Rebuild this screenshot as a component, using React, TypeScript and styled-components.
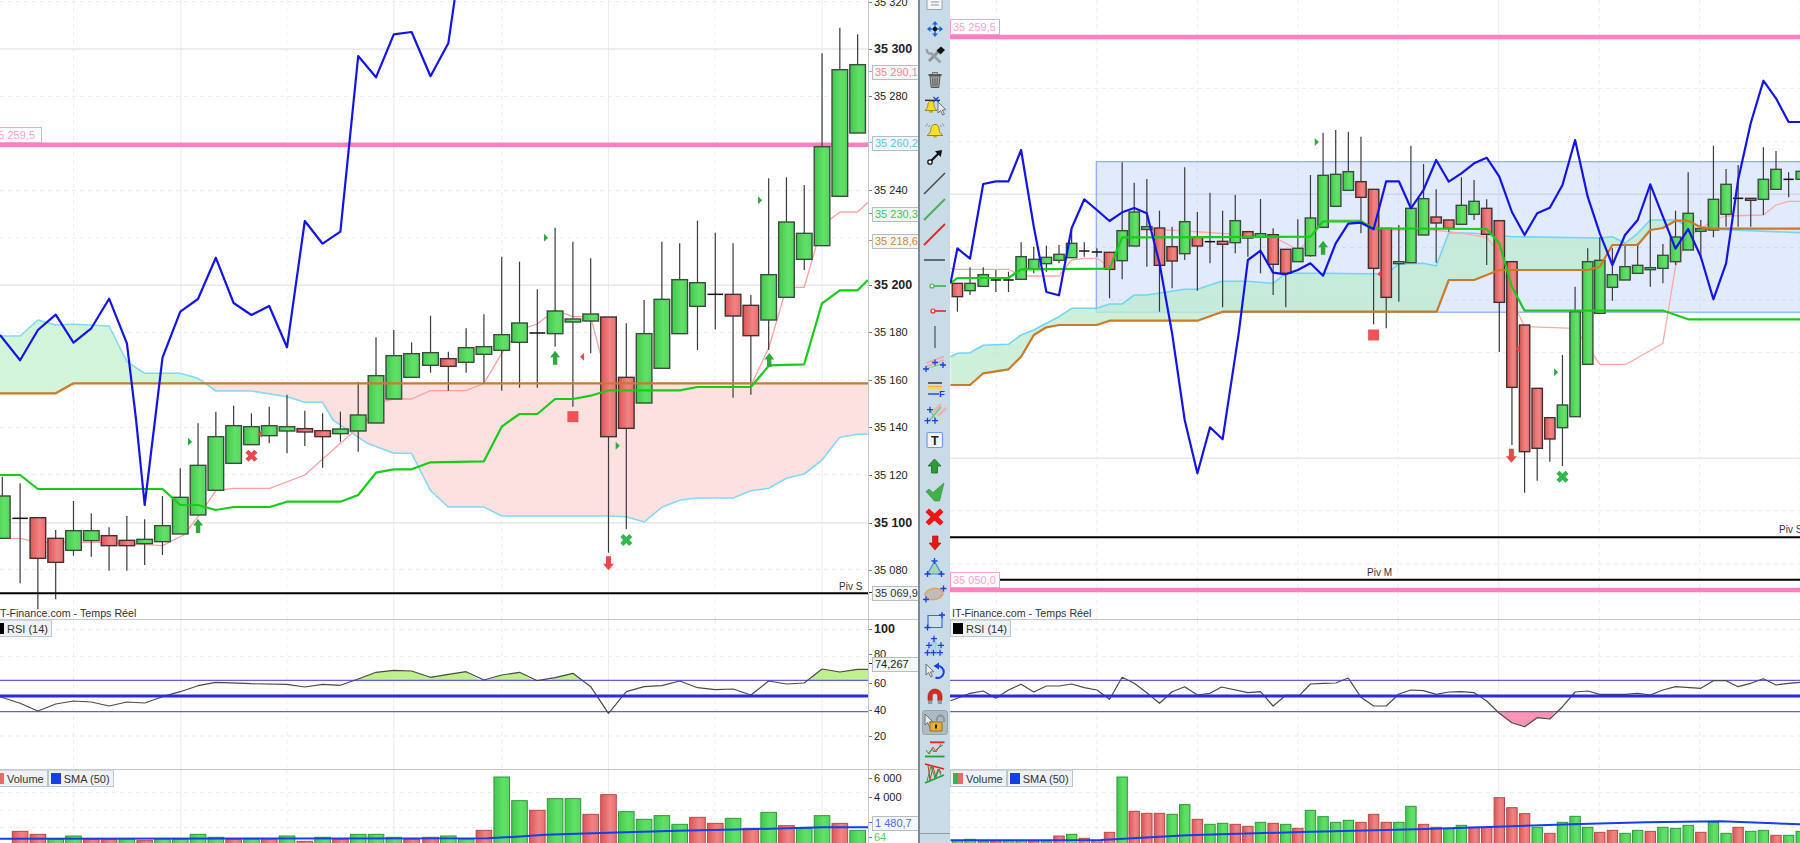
import React from 'react';
import styled, { createGlobalStyle } from 'styled-components';

const GlobalStyle = createGlobalStyle`
  html, body {
    margin: 0;
    padding: 0;
    background: #fff;
    font-family: "Liberation Sans", Arial, sans-serif;
    overflow: hidden;
  }
`;

type Pt = [number, number];
type Kind = 'g' | 'r' | 'd';
type Candle = [number, number, number, number, number, Kind];
type Bar = [number, number, Kind];

// Chart values are read off the reference crops: x was squeezed by 1.742 and y stretched by 3
const kx = 1.742;
const PRICE_TOP = 0;
const RSI_TOP = 620;
const VOL_TOP = 770;
const low = (pts: Pt[]): Pt[] => pts.map(([x, y]) => [x, y + 1260]);

const path = (pts: Pt[], dx: number, top: number) =>
  pts.map(([x, y]) => `${(x / kx - dx).toFixed(1)},${(y / 3 - top).toFixed(1)}`).join(' ');

// Left chart
const leftCandles: Candle[] = [
  ...([
    [4, 228, 355, 170, 355, 'g'], [35, 295, 295, 190, 490, 'd'], [66, 293, 415, 293, 568, 'r'],
    [97, 355, 427, 330, 538, 'r'], [128, 332, 391, 243, 407, 'g'], [159, 332, 362, 280, 410, 'g'],
    [190, 347, 377, 322, 452, 'r'], [221, 361, 377, 288, 452, 'r'], [252, 358, 371, 298, 435, 'g'],
    [283, 317, 365, 228, 405, 'g'], [314, 232, 342, 145, 342, 'g'], [345, 136, 285, 10, 285, 'g'],
    [376, 50, 211, -25, 211, 'g'], [407, 17, 130, -43, 130, 'g'], [438, 20, 74, -20, 74, 'g'],
    [469, 17, 47, -40, 70, 'g'], [500, 20, 33, -76, 100, 'g'], [531, 26, 36, -28, 78, 'r'],
    [562, 32, 50, -20, 143, 'r'], [593, 27, 41, -25, 65, 'g'], [624, -15, 33, -115, 95, 'g'],
    [655, -133, 9, -248, 9, 'g'],
  ] as Candle[]).map(([x, t, b, h, l, k]) => [x, t + 1260, b + 1260, h + 1260, l + 1260, k] as Candle),
  [686, 1067, 1197, 990, 1197, 'g'], [717, 1061, 1132, 1027, 1132, 'g'], [750, 1058, 1096, 947, 1118, 'g'],
  [781, 1076, 1099, 1055, 1172, 'r'], [812, 1043, 1087, 985, 1118, 'g'], [843, 1040, 1063, 943, 1150, 'g'],
  [874, 1004, 1051, 770, 1172, 'g'], [905, 969, 1027, 785, 1163, 'g'], [936, 999, 999, 868, 1163, 'd'],
  [967, 933, 1001, 683, 1040, 'g'], [998, 957, 966, 725, 1220, 'g'], [1029, 942, 963, 775, 1060, 'g'],
  [1060, 951, 1310, 951, 1658, 'r'], [1091, 1132, 1285, 970, 1588, 'r'], [1122, 1001, 1209, 900, 1209, 'g'],
  [1153, 898, 1105, 725, 1105, 'g'], [1184, 839, 1001, 730, 1001, 'g'], [1215, 848, 919, 662, 1050, 'g'],
  [1246, 883, 883, 698, 988, 'd'], [1277, 883, 948, 730, 1193, 'r'], [1308, 916, 1007, 885, 1184, 'r'],
  [1339, 824, 960, 535, 1050, 'g'], [1370, 666, 892, 532, 892, 'g'], [1401, 700, 778, 555, 810, 'g'],
  [1432, 440, 737, 160, 737, 'g'], [1463, 209, 589, 83, 589, 'g'], [1494, 194, 399, 103, 399, 'g'],
];

const leftBlue: Pt[] = [
  [0, 1005], [35, 1081], [66, 990], [97, 944], [128, 1028], [159, 985], [190, 896], [221, 1030], [237, 1260],
  [252, 1515], [270, 1260], [283, 1073], [314, 935], [345, 897], [376, 773], [407, 909], [438, 945], [469, 918],
  [500, 1042], [531, 663], [562, 731], [593, 695], [624, 168], [655, 232], [686, 103], [717, 96], [750, 229],
  [781, 130], [792, 0],
];
const leftPink: Pt[] = [
  ...low([[0, 355], [35, 355], [66, 367], [190, 367], [283, 377], [320, 345], [345, 290], [376, 212], [407, 205],
    [470, 205], [531, 165], [593, 70], [640, 0]]),
  [655, 1210], [686, 1197], [717, 1197], [750, 1172], [812, 1172], [843, 1150], [874, 1060], [905, 990], [936, 972],
  [967, 930], [998, 950], [1029, 950], [1048, 1075], [1060, 1150], [1310, 1150], [1340, 1040], [1370, 862],
  [1401, 862], [1432, 677], [1463, 636], [1494, 636], [1512, 607],
];
const leftGreen: Pt[] = [
  ...low([[0, 165], [35, 165], [66, 207], [283, 207], [314, 255], [345, 255], [376, 270], [407, 261], [470, 261],
    [500, 245], [593, 245], [624, 225], [655, 158], [686, 148], [717, 148], [750, 127], [843, 124], [874, 20], [890, 0]]),
  [905, 1242], [936, 1242], [967, 1197], [998, 1197], [1029, 1187], [1060, 1171], [1184, 1171], [1215, 1161],
  [1308, 1161], [1340, 1096], [1401, 1093], [1432, 910], [1463, 871], [1494, 871], [1512, 840],
];
const leftOrange: Pt[] = [[0, 1180], [97, 1180], [128, 1150], [1512, 1150]];
const leftCloudTop: Pt[] = [[0, 1008], [35, 1008], [66, 960], [97, 975], [128, 973], [190, 978], [221, 1085], [252, 1120], [314, 1120], [345, 1135], [358, 1150]];
const leftCloudLow: Pt[] = [
  [358, 1150], [376, 1173], [438, 1173], [500, 1190], [531, 1207], [562, 1207], [580, 1260],
  ...low([[640, 70], [686, 100], [717, 100], [750, 212], [781, 261], [843, 261], [874, 288], [1060, 288], [1091, 290],
    [1122, 306], [1153, 262], [1184, 241], [1215, 234], [1277, 234], [1308, 212], [1339, 205], [1370, 175], [1401, 162],
    [1432, 120], [1463, 52], [1494, 43], [1512, 43]]),
];

// Right chart
const rightCandles: Candle[] = [
  [100, 850, 890, 850, 935, 'r'], [122, 850, 872, 802, 885, 'g'], [145, 824, 859, 802, 859, 'g'], [167, 840, 840, 810, 876, 'd'],
  [189, 840, 840, 815, 876, 'd'], [211, 770, 838, 727, 838, 'g'], [233, 778, 807, 740, 820, 'g'], [255, 772, 791, 737, 815, 'g'],
  [277, 763, 781, 735, 790, 'g'], [299, 730, 773, 685, 773, 'g'], [321, 753, 753, 727, 770, 'd'], [343, 756, 756, 745, 770, 'd'],
  [365, 757, 808, 757, 895, 'r'], [387, 692, 782, 487, 838, 'g'], [408, 636, 738, 548, 738, 'g'], [430, 680, 688, 537, 800, 'g'],
  [452, 684, 796, 632, 935, 'r'], [474, 740, 783, 680, 865, 'r'], [496, 665, 761, 502, 780, 'g'], [518, 712, 738, 636, 872, 'r'],
  [540, 725, 725, 578, 790, 'd'], [562, 724, 733, 632, 922, 'r'], [584, 662, 728, 585, 760, 'g'], [606, 695, 714, 695, 770, 'r'],
  [628, 701, 710, 597, 820, 'g'], [650, 704, 793, 685, 885, 'r'], [672, 748, 820, 748, 922, 'r'], [693, 745, 785, 658, 785, 'g'],
  [715, 654, 767, 525, 770, 'g'], [737, 526, 682, 398, 682, 'g'], [759, 523, 619, 390, 619, 'g'], [781, 515, 571, 395, 571, 'g'],
  [803, 545, 592, 410, 700, 'r'], [825, 568, 805, 568, 973, 'r'], [847, 685, 892, 685, 985, 'r'], [869, 785, 791, 675, 905, 'g'],
  [890, 625, 788, 437, 788, 'g'], [912, 596, 705, 492, 705, 'g'], [934, 651, 669, 568, 788, 'r'], [956, 660, 685, 660, 695, 'r'],
  [978, 616, 673, 532, 673, 'g'], [1000, 604, 643, 540, 660, 'g'], [1022, 625, 703, 598, 795, 'r'], [1044, 662, 907, 662, 1056, 'r'],
  [1066, 785, 1162, 785, 1335, 'r'], [1088, 975, 1355, 975, 1478, 'r'], [1110, 1165, 1345, 1165, 1442, 'r'], [1132, 1253, 1317, 1253, 1385, 'r'],
  [1154, 1215, 1283, 1065, 1398, 'g'], [1176, 935, 1250, 860, 1250, 'g'], [1198, 785, 1093, 745, 1093, 'g'], [1219, 781, 940, 712, 940, 'g'],
  [1241, 824, 862, 745, 902, 'g'], [1263, 800, 840, 737, 840, 'g'], [1285, 796, 820, 730, 820, 'g'], [1307, 803, 807, 552, 860, 'g'],
  [1329, 766, 805, 732, 850, 'g'], [1351, 711, 785, 632, 795, 'g'], [1373, 640, 750, 517, 750, 'g'], [1395, 686, 694, 660, 770, 'g'],
  [1417, 598, 690, 437, 712, 'g'], [1439, 553, 643, 507, 680, 'g'], [1460, 595, 595, 495, 680, 'd'], [1482, 595, 601, 595, 680, 'r'],
  [1504, 538, 598, 442, 645, 'g'], [1526, 508, 568, 453, 568, 'g'], [1548, 538, 538, 517, 592, 'd'], [1570, 514, 538, 480, 560, 'g'],
];
const rightBlue: Pt[] = [
  [88, 850], [100, 745], [122, 776], [145, 552], [167, 544], [189, 544], [211, 450], [233, 680], [255, 876], [277, 886], [299, 685],
  [321, 598], [343, 630], [365, 663], [387, 637], [408, 624], [430, 640], [452, 790], [474, 1000], [496, 1260], [518, 1420], [540, 1282],
  [562, 1318], [590, 1000], [606, 780], [628, 752], [650, 818], [672, 823], [693, 810], [715, 790], [737, 827], [759, 730], [781, 671],
  [803, 668], [825, 688], [847, 544], [869, 544], [890, 625], [912, 570], [934, 480], [956, 545], [978, 520], [1000, 490], [1022, 473],
  [1044, 530], [1066, 636], [1088, 705], [1110, 640], [1132, 623], [1154, 555], [1176, 420], [1198, 590], [1219, 700], [1241, 795],
  [1263, 705], [1285, 660], [1307, 553], [1329, 650], [1351, 746], [1373, 687], [1395, 770], [1417, 898], [1439, 790], [1460, 540],
  [1482, 370], [1504, 242], [1526, 295], [1548, 366], [1570, 366],
];
const rightPink: Pt[] = [
  [88, 805], [100, 808], [189, 808], [211, 828], [277, 828], [299, 780], [321, 775], [343, 775], [365, 800], [387, 700], [408, 690],
  [470, 690], [650, 710], [672, 730], [693, 750], [715, 720], [737, 660], [803, 660], [825, 690], [930, 690], [980, 700], [1022, 712],
  [1044, 760], [1066, 900], [1088, 980], [1176, 985], [1219, 1093], [1265, 1093], [1329, 1030], [1351, 800], [1373, 712], [1417, 660],
  [1439, 648], [1504, 645], [1526, 615], [1548, 604], [1570, 604],
];
const rightGreen: Pt[] = [
  [88, 850], [100, 834], [189, 834], [211, 808], [365, 806], [387, 712], [430, 712], [715, 710], [737, 664], [803, 664], [825, 685],
  [1022, 687], [1044, 730], [1066, 860], [1088, 932], [1330, 932], [1373, 958], [1570, 958],
];
const rightOrange: Pt[] = [
  [88, 1155], [122, 1155], [145, 1120], [189, 1108], [211, 1070], [233, 1005], [255, 982], [277, 975], [343, 975], [365, 962], [518, 962],
  [562, 935], [935, 935], [956, 840], [1000, 840], [1044, 810], [1198, 810], [1219, 800], [1241, 735], [1285, 735], [1307, 690], [1329, 684],
  [1351, 662], [1373, 662], [1395, 682], [1417, 686], [1570, 686],
];
const rightCloud: Pt[] = [
  [88, 1070], [100, 1060], [122, 1058], [145, 1036], [189, 1033], [211, 1005], [233, 990], [255, 970], [277, 950], [299, 925], [343, 925],
  [365, 912], [387, 912], [408, 885], [430, 885], [496, 868], [518, 868], [560, 844], [606, 844], [650, 850], [672, 820], [737, 820],
  [847, 822], [869, 792], [912, 790], [934, 798], [956, 698], [1000, 700], [1066, 710], [1219, 714], [1241, 710], [1263, 730], [1285, 700],
  [1307, 660], [1351, 660], [1373, 680], [1395, 686], [1570, 698],
];

// RSI, y from the lower crops
const leftRsi: Pt[] = [
  [0, 830], [35, 850], [66, 873], [97, 852], [128, 843], [159, 846], [190, 858], [221, 846], [252, 849], [283, 830], [314, 815], [345, 797],
  [376, 787], [438, 791], [500, 793], [531, 801], [562, 793], [593, 796], [624, 777], [655, 757], [686, 751], [717, 753], [750, 772], [781, 763],
  [812, 755], [843, 780], [874, 765], [905, 757], [936, 782], [967, 773], [998, 760], [1029, 800], [1060, 880], [1091, 815], [1122, 800],
  [1153, 797], [1184, 783], [1215, 803], [1246, 809], [1277, 807], [1308, 825], [1339, 783], [1370, 792], [1401, 789], [1432, 747], [1463, 756],
  [1494, 748], [1512, 748],
];
const rightRsi: Pt[] = [
  [88, 842], [100, 835], [122, 820], [145, 813], [167, 835], [189, 810], [211, 793], [233, 816], [255, 798], [277, 798], [299, 792], [321, 803],
  [343, 810], [365, 838], [387, 772], [408, 790], [430, 818], [452, 850], [474, 815], [496, 800], [518, 825], [540, 820], [560, 801], [606, 818],
  [628, 815], [650, 858], [672, 826], [696, 826], [715, 792], [737, 790], [759, 789], [781, 774], [803, 832], [825, 858], [847, 858], [869, 822],
  [890, 810], [912, 812], [934, 823], [956, 816], [978, 815], [1000, 818], [1022, 843], [1044, 880], [1066, 908], [1088, 920], [1110, 893],
  [1132, 897], [1154, 860], [1176, 816], [1198, 813], [1219, 823], [1263, 823], [1285, 820], [1307, 825], [1329, 810], [1351, 800], [1395, 805],
  [1417, 782], [1439, 782], [1460, 800], [1482, 790], [1504, 776], [1526, 795], [1548, 790], [1570, 787],
];
const leftRsiHigh: Pt[][] = [
  [[612, 781], [624, 777], [655, 757], [686, 751], [717, 753], [750, 772], [781, 763], [812, 755], [835, 781]],
  [[848, 781], [874, 765], [905, 757], [928, 781]],
  [[958, 781], [967, 773], [998, 760], [1015, 781]],
  [[1410, 781], [1432, 747], [1463, 756], [1494, 748], [1512, 748], [1512, 781]],
];
const rightRsiLow: Pt[] = [[1042, 875], [1044, 880], [1066, 908], [1088, 920], [1110, 893], [1132, 897], [1141, 875]];

const leftBars: Bar[] = [
  [35, 1234, 'r'], [66, 1243, 'r'], [97, 1257, 'g'], [128, 1248, 'g'], [159, 1258, 'r'], [190, 1258, 'r'], [221, 1257, 'g'], [252, 1262, 'r'],
  [283, 1257, 'g'], [314, 1258, 'g'], [345, 1243, 'g'], [376, 1252, 'g'], [407, 1258, 'r'], [438, 1257, 'g'], [469, 1257, 'r'], [500, 1248, 'g'],
  [531, 1264, 'r'], [562, 1252, 'g'], [593, 1258, 'r'], [624, 1243, 'g'], [655, 1243, 'g'], [686, 1252, 'g'], [717, 1258, 'r'], [750, 1252, 'r'],
  [781, 1248, 'g'], [812, 1258, 'g'], [843, 1231, 'r'], [874, 1071, 'g'], [905, 1142, 'g'], [936, 1171, 'r'], [967, 1136, 'g'], [998, 1136, 'g'],
  [1029, 1183, 'r'], [1060, 1124, 'r'], [1091, 1175, 'g'], [1122, 1198, 'g'], [1153, 1187, 'g'], [1184, 1213, 'g'], [1215, 1192, 'r'], [1246, 1210, 'r'],
  [1277, 1195, 'g'], [1308, 1225, 'r'], [1339, 1177, 'g'], [1370, 1217, 'r'], [1401, 1226, 'g'], [1432, 1187, 'g'], [1463, 1210, 'r'], [1494, 1231, 'g'],
];
const rightBars: Bar[] = [
  [100, 1262, 'g'], [122, 1258, 'g'], [145, 1265, 'g'], [167, 1263, 'r'], [189, 1262, 'g'], [211, 1262, 'g'], [233, 1264, 'r'], [255, 1265, 'g'],
  [277, 1248, 'r'], [299, 1243, 'g'], [321, 1255, 'r'], [343, 1262, 'r'], [365, 1237, 'r'], [387, 1071, 'g'], [408, 1174, 'r'], [430, 1180, 'r'],
  [452, 1180, 'r'], [474, 1183, 'g'], [496, 1154, 'g'], [518, 1198, 'r'], [540, 1213, 'g'], [562, 1210, 'g'], [584, 1213, 'r'], [606, 1219, 'r'],
  [628, 1207, 'g'], [650, 1210, 'r'], [672, 1213, 'g'], [693, 1225, 'r'], [715, 1171, 'g'], [737, 1190, 'g'], [759, 1207, 'g'], [781, 1201, 'g'],
  [803, 1207, 'r'], [825, 1183, 'r'], [847, 1207, 'r'], [869, 1207, 'g'], [890, 1159, 'g'], [912, 1213, 'r'], [934, 1222, 'r'], [956, 1226, 'g'],
  [978, 1216, 'g'], [1000, 1222, 'r'], [1022, 1222, 'r'], [1044, 1133, 'r'], [1066, 1163, 'r'], [1088, 1181, 'r'], [1110, 1222, 'g'], [1132, 1240, 'r'],
  [1154, 1207, 'g'], [1176, 1189, 'g'], [1198, 1222, 'g'], [1219, 1237, 'r'], [1241, 1231, 'r'], [1263, 1240, 'g'], [1285, 1231, 'g'], [1307, 1234, 'r'],
  [1329, 1222, 'g'], [1351, 1225, 'g'], [1373, 1216, 'g'], [1395, 1237, 'r'], [1417, 1207, 'g'], [1439, 1240, 'g'], [1460, 1222, 'r'], [1482, 1234, 'g'],
  [1504, 1231, 'g'], [1526, 1246, 'r'], [1548, 1246, 'g'], [1570, 1234, 'g'],
];
const leftSma: Pt[] = [[0, 1256], [850, 1255], [900, 1250], [950, 1244], [1060, 1238], [1180, 1232], [1300, 1228], [1432, 1222], [1512, 1222]];
const rightSma: Pt[] = [[88, 1261], [350, 1260], [500, 1246], [700, 1236], [900, 1228], [1040, 1220], [1170, 1213], [1300, 1207], [1430, 1204], [1570, 1213]];

// Page layout
const Page = styled.div`
  display: grid;
  grid-template-columns: 918px 32px 850px;
  width: 1800px;
  height: 843px;
  overflow: hidden;
`;

const Chart = styled.section`
  display: flex;
  flex-direction: column;
  height: 843px;
  min-width: 0;
  overflow: hidden;
`;

const Pane = styled.div<{ $h: number; $last?: boolean }>`
  display: flex;
  height: ${(p) => p.$h}px;
  flex: none;
  box-sizing: border-box;
  border-bottom: ${(p) => (p.$last ? 'none' : '1px solid #c2cace')};
`;

const Plot = styled.div`
  position: relative;
  flex: 1;
  min-width: 0;
  overflow: hidden;

  svg {
    display: block;
    width: 100%;
    height: 100%;
  }
`;

const Axis = styled.div`
  position: relative;
  flex: none;
  width: 50px;
  box-sizing: border-box;
  border-left: 1px solid #c2cace;
  overflow: hidden;
`;

const AxisLabel = styled.span<{ $y: number; $bold?: boolean; $color?: string }>`
  position: absolute;
  left: 5px;
  top: ${(p) => p.$y - 7}px;
  height: 14px;
  line-height: 14px;
  font-size: ${(p) => (p.$bold ? 12.5 : 11)}px;
  font-weight: ${(p) => (p.$bold ? 700 : 400)};
  color: ${(p) => p.$color ?? '#222'};
  white-space: nowrap;

  &::before {
    content: '';
    position: absolute;
    left: -5px;
    top: 7px;
    width: 3px;
    height: 1px;
    background: #777;
  }
`;

const AxisTag = styled.span<{ $y: number; $color: string }>`
  position: absolute;
  left: 3px;
  top: ${(p) => p.$y - 8}px;
  width: 50px;
  height: 15px;
  box-sizing: border-box;
  padding-left: 2px;
  line-height: 12px;
  font-size: 11px;
  color: ${(p) => p.$color};
  background: #f3f7fa;
  border: 1.5px solid #b6bec2;
  white-space: nowrap;

  &::before {
    content: '';
    position: absolute;
    left: -5px;
    top: 5px;
    width: 4px;
    height: 1px;
    background: ${(p) => p.$color};
  }
`;

const LevelTag = styled.span<{ $x: number; $y: number; $w: number }>`
  position: absolute;
  left: ${(p) => p.$x}px;
  top: ${(p) => p.$y}px;
  width: ${(p) => p.$w}px;
  height: 16px;
  box-sizing: border-box;
  padding: 0 6px 0 2px;
  line-height: 15px;
  font-size: 11px;
  color: #ff9fcf;
  background: #fff;
  border: 1px solid #ff9fcf;
  white-space: nowrap;
  text-align: ${(p) => (p.$x < 0 ? 'right' : 'left')};
`;

const PivotLabel = styled.span<{ $x: number; $y: number }>`
  position: absolute;
  left: ${(p) => p.$x}px;
  top: ${(p) => p.$y - 7}px;
  line-height: 14px;
  font-size: 10px;
  color: #333;
  white-space: nowrap;
`;

const Source = styled.span<{ $x: number }>`
  position: absolute;
  left: ${(p) => p.$x}px;
  top: 606px;
  line-height: 14px;
  font-size: 10.7px;
  color: #333;
  white-space: nowrap;
`;

const LegendRow = styled.div<{ $x: number }>`
  position: absolute;
  left: ${(p) => p.$x}px;
  top: 0;
  display: flex;
  height: 17px;
`;

const Legend = styled.span`
  display: flex;
  align-items: center;
  gap: 3px;
  padding: 0 3px 0 2px;
  box-sizing: border-box;
  font-size: 11px;
  color: #333;
  background: #eef2f4;
  border: 1px solid #b8c6ce;
  border-top-color: #d0d8dc;
  white-space: nowrap;
`;

const Swatch = styled.i<{ $c: string; $c2?: string }>`
  display: block;
  width: 10px;
  height: 11px;
  background: ${(p) =>
    p.$c2 ? `linear-gradient(90deg, ${p.$c} 50%, ${p.$c2} 50%)` : p.$c};
`;

const Defs = styled.svg`
  position: absolute;
  width: 0;
  height: 0;
`;

// Toolbar
const Toolbar = styled.nav`
  display: flex;
  flex-direction: column;
  height: 843px;
  box-sizing: border-box;
  background: #c9dbe6;
  border-left: 2px solid #7e8a92;
  overflow: hidden;
`;

const ToolList = styled.div`
  display: grid;
  grid-auto-rows: 25.72px;
  justify-items: center;
  align-items: center;
  margin-top: -10px;
`;

const Tool = styled.button<{ $active?: boolean }>`
  display: flex;
  align-items: center;
  justify-content: center;
  width: 26px;
  height: 25px;
  padding: 0;
  background: ${(p) => (p.$active ? '#aebac2' : 'transparent')};
  border: 1px solid ${(p) => (p.$active ? '#9aa6ae' : 'transparent')};
  border-radius: 3px;

  svg {
    display: block;
    flex: none;
  }
`;

const ToolFoot = styled.div`
  margin-top: auto;
  height: 9px;
  border-top: 1px solid #8f9ca4;
`;

const Plus = ({ x, y }: { x: number; y: number }) => (
  <path d={`M${x - 3} ${y}h6M${x} ${y - 3}v6`} stroke="#1a3fe0" strokeWidth="1.3" fill="none" />
);

const Cursor = ({ x, y }: { x: number; y: number }) => (
  <path
    d={`M${x} ${y}l0 11 2.6-2.4 2 4.4 1.8-.8-2-4.3 3.4-.2z`}
    fill="#e8eaec"
    stroke="#555"
    strokeWidth=".8"
  />
);

const toolIcons: React.ReactNode[] = [
  <g key="doc">
    <path d="M7 -4h11l4 4v19.500H7z" fill="#f4f6f8" stroke="#9aa4aa" />
    <path d="M11 6h8M11 9h8M11 12h8M11 15h8" stroke="#8a949a" />
  </g>,
  <g key="move">
    <path d="M15 5l3 3.500h-6zM15 21l3-3.500h-6zM7 13l3.500-3v6zM23 13l-3.500-3v6z" fill="#1a66e0" />
    <path d="M15 7v12M9 13h12" stroke="#1a66e0" strokeWidth="1.500" />
    <circle cx="15" cy="13" r="2.200" fill="#111" />
  </g>,
  <g key="tools">
    <path d="M9 20L20 9" stroke="#8c9499" strokeWidth="3" />
    <path d="M7 8a3.500 3.500 0 0 0 4.500 4.500l9 9" stroke="#9aa2a7" strokeWidth="2.600" fill="none" />
    <path d="M16.500 9.500l4.500-4 4 3.500-4.500 4.500z" fill="#151515" />
  </g>,
  <g key="trash">
    <path d="M10 9h10l-1.200 11.500h-7.600z" fill="#a4acb0" stroke="#555" />
    <path d="M8.500 8h13" stroke="#555" strokeWidth="2" />
    <path d="M12.500 5.500h5v2h-5z" fill="#c4c8cc" stroke="#555" strokeWidth=".8" />
    <path d="M12.700 10.500l.4 9M15 10.500v9M17.300 10.500l-.4 9" stroke="#555" />
  </g>,
  <g key="bell-x">
    <path d="M5 7.300h15" stroke="#111" strokeWidth="1.200" />
    <path d="M11 8c-2.600 0-3 2.500-3.200 5-.2 2.500-2.800 4.500-2.800 4.500h12s-2.600-2-2.800-4.500C14 10.500 13.600 8 11 8z" fill="#f2dc2a" stroke="#8d7a10" strokeWidth=".8" />
    <path d="M9 18a2 2 0 0 0 4 0z" fill="#c2a814" />
    <path d="M13.500 4l5 5M18.500 4l-5 5" stroke="#1a3fe0" strokeWidth="1.200" />
    <Cursor x={18} y={9} />
  </g>,
  <g key="bell">
    <path d="M15 6.500c-3.500 0-4 3-4.200 6-.2 2.500-3.800 5-3.800 5h16s-3.600-2.500-3.800-5c-.2-3-.7-6-4.200-6z" fill="#f7e02a" stroke="#8d7a10" strokeWidth=".9" />
    <path d="M12.800 18a2.300 2.300 0 0 0 4.400 0z" fill="#c2a814" />
    <path d="M8 5.500c-1.200.8-1.800 1.800-2 3M10 7c-.7.500-1.200 1-1.400 2M22 5.500c1.200.8 1.800 1.800 2 3M20 7c.7.500 1.200 1 1.400 2" stroke="#8d979c" fill="none" />
  </g>,
  <g key="arrow">
    <circle cx="10" cy="18" r="2.200" fill="#fff" stroke="#111" strokeWidth="1.300" />
    <path d="M11.500 16.500L19 9" stroke="#111" strokeWidth="2.200" />
    <path d="M22 6l-1.200 7-5.800-5.800z" fill="#111" />
  </g>,
  <path key="line" d="M4 24L25 3" stroke="#444" strokeWidth="1.400" />,
  <path key="green" d="M4 24L25 3" stroke="#3cb34a" strokeWidth="1.800" />,
  <path key="red" d="M4 24L25 3" stroke="#ee2222" strokeWidth="1.800" />,
  <path key="hline" d="M4 13h21" stroke="#222" strokeWidth="1.200" />,
  <g key="green-h">
    <path d="M14 13h12" stroke="#3cb34a" strokeWidth="1.600" />
    <circle cx="12" cy="13" r="2" fill="#fff" stroke="#3cb34a" strokeWidth="1.200" />
  </g>,
  <g key="red-h">
    <path d="M15 13h11" stroke="#ee2222" strokeWidth="1.600" />
    <circle cx="13" cy="13" r="2" fill="#fff" stroke="#ee2222" strokeWidth="1.200" />
  </g>,
  <path key="vline" d="M15 2v22" stroke="#5c666c" strokeWidth="1.400" />,
  <g key="channel">
    <path d="M6 13L24 6.500M6 16.500L24 10" stroke="#f0a6a0" strokeWidth="1.600" />
    <path d="M6 19L24 13" stroke="#7ccf8a" strokeWidth="1.300" />
    <Plus x={6} y={19} />
    <Plus x={15} y={12.500} />
    <Plus x={23} y={15} />
  </g>,
  <g key="fib">
    <path d="M8 7h14" stroke="#111" strokeWidth="1.200" />
    <path d="M8 10.500h14" stroke="#f0b040" />
    <path d="M8 12.500h14" stroke="#f2d24a" />
    <path d="M8 18h11" stroke="#1a3fe0" strokeWidth="1.400" />
    <text x="19" y="20.500" fontFamily="Liberation Sans, sans-serif" fontSize="9.500" fontWeight="700" fill="#1a3fe0">F</text>
  </g>,
  <g key="parallel">
    <path d="M13 11L21 3M18 15L26 7" stroke="#f0b0ac" strokeWidth="2.600" />
    <path d="M9 20L21 6" stroke="#68c878" strokeWidth="1.400" />
    <path d="M10 9l6 10" stroke="#68c878" strokeWidth="1.400" />
    <Plus x={10} y={8.700} />
    <Plus x={7.500} y={19.700} />
    <Plus x={15} y={19.700} />
  </g>,
  <g key="text">
    <rect x="7" y="5.500" width="15.500" height="15" rx="1.500" fill="#f2f6fa" stroke="#6a9cf0" strokeWidth="1.200" />
    <text x="14.800" y="17.500" textAnchor="middle" fontFamily="Liberation Sans, sans-serif" fontSize="12.500" fontWeight="700" fill="#222">T</text>
  </g>,
  <path key="up" d="M14.500 6l6.500 7h-3.500v7h-6v-7H8z" fill="#2e9a3a" stroke="#1c6a26" strokeWidth=".8" />,
  <path key="check" d="M6 12.500l3-2.500 4 3.500L24 4l-4.500 18h-5z" fill="#44b04a" stroke="#2d8a38" strokeWidth=".6" />,
  <path key="cross" d="M5.500 8l3.500-3.500 5.500 5 5.500-5L23.500 8l-5 5 5 5-3.500 3.500-5.500-5-5.500 5L5.500 18l5-5z" fill="#f01414" />,
  <path key="down" d="M15 20l-6-7h3.500V6h5.500v7H21z" fill="#ee1414" stroke="#b30e0e" strokeWidth=".6" />,
  <g key="triangle">
    <path d="M14.500 5.500L7.500 18h14z" fill="#a6d8a8" stroke="#4a8cd8" strokeWidth="1.200" />
    <Plus x={14.500} y={5} />
    <Plus x={7.500} y={18} />
    <Plus x={21.500} y={18} />
  </g>,
  <g key="ellipse">
    <ellipse cx="14" cy="13" rx="9" ry="5.500" transform="rotate(-8 14 13)" fill="#c0bcb8" stroke="#ea9a6a" strokeWidth="1.400" />
    <Plus x={23.500} y={7.500} />
    <Plus x={6} y={18.500} />
  </g>,
  <g key="rect">
    <path d="M8 8.500h14v12H8z" fill="#cfe0ee" stroke="#3a6ce0" strokeWidth="1.200" />
    <Plus x={22} y={8} />
    <Plus x={7.500} y={20.500} />
  </g>,
  <g key="pitch">
    <path d="M14 6L6 22M14 6l8 16M14 6l-3 16M14 6l3 16" stroke="#8ec0f0" />
    <Plus x={14} y={5.700} />
    <Plus x={9} y={12.300} />
    <Plus x={21} y={12.300} />
    <Plus x={7.500} y={19.700} />
    <Plus x={13.500} y={19.700} />
    <Plus x={20} y={19.700} />
  </g>,
  <g key="undo">
    <Cursor x={6} y={5} />
    <path d="M17 7a6 6 0 1 1-1.500 11.500" stroke="#1a3fe0" strokeWidth="2" fill="none" />
    <path d="M19 3.500v7l-5.500-3.500z" fill="#1a3fe0" />
  </g>,
  <g key="magnet">
    <path d="M8 16.500V12a7 7 0 0 1 14 0v4.500h-4.200V12a2.800 2.800 0 0 0-5.600 0v4.500z" fill="#d92a20" stroke="#9a1c14" strokeWidth=".6" />
    <path d="M8 16.500h4.200V20H8zM17.800 16.500H22V20h-4.200z" fill="#8e979c" />
  </g>,
  <g key="lock">
    <Cursor x={5} y={4} />
    <path d="M17 11V9a3.500 3.500 0 0 1 7 0v3" stroke="#8a9298" strokeWidth="1.800" fill="none" />
    <path d="M10 12h12v9H10z" fill="#e8b030" stroke="#8a6410" strokeWidth=".8" />
    <path d="M15 14.500h2v4h-2z" fill="#2a2008" />
  </g>,
  <g key="zigzag">
    <path d="M10 6.300h14.500" stroke="#ee2222" strokeWidth="1.800" />
    <path d="M5 20.500h19.500" stroke="#18a830" strokeWidth="1.800" />
    <path d="M6 14l3 4 4-7 3 5 5-8" stroke="#e04030" strokeWidth="1" fill="none" />
    <path d="M8 18l4-5 2 3 4-4 5-3" stroke="#28a040" strokeWidth="1" fill="none" />
  </g>,
  <g key="wedge">
    <path d="M5 3l19 5" stroke="#ee2222" strokeWidth="1.800" />
    <path d="M5 22l19-8" stroke="#18a830" strokeWidth="1.800" />
    <path d="M8 4l2 15 3-13 3 10 3-8 2 4" stroke="#cc3030" strokeWidth="1" fill="none" />
    <path d="M7 20l4-15 4 12 3-9 3 6" stroke="#28a040" strokeWidth="1" fill="none" />
  </g>,
];

// Chart drawing parts
const CandleMark = ({ c, dx, half }: { c: Candle; dx: number; half: number }) => {
  const [zx, top, bottom, hi, lo, kind] = c;
  const x = zx / kx - dx;
  const t = top / 3;
  const b = bottom / 3;
  return (
    <g>
      <line x1={x} x2={x} y1={hi / 3} y2={lo / 3} stroke="#3a3a3a" strokeWidth="1.200" />
      {kind === 'd' ? (
        <line x1={x - half} x2={x + half} y1={t} y2={t} stroke="#111" strokeWidth="1.500" />
      ) : (
        <rect
          x={x - half}
          y={t}
          width={half * 2}
          height={Math.max(b - t, 2)}
          fill={kind === 'g' ? 'url(#candleGreen)' : 'url(#candleRed)'}
          stroke={kind === 'g' ? '#3a4c3c' : '#43302f'}
          strokeWidth="1.400"
        />
      )}
    </g>
  );
};

const Line = ({ pts, dx, top = 0, color, w }: { pts: Pt[]; dx: number; top?: number; color: string; w: number }) => (
  <polyline points={path(pts, dx, top)} fill="none" stroke={color} strokeWidth={w} strokeLinejoin="round" />
);

const Fill = ({ pts, dx, top = 0, color }: { pts: Pt[]; dx: number; top?: number; color: string }) => (
  <polygon points={path(pts, dx, top)} fill={color} />
);

const Grid = ({ xs, solidX, ys, solidY, dx, top, w, h }: { xs: number[]; solidX: number[]; ys: number[]; solidY: number[]; dx: number; top: number; w: number; h: number }) => (
  <g>
    {xs.map((x) => (
      <line key={`x${x}`} x1={x / kx - dx} x2={x / kx - dx} y1={0} y2={h} stroke="#ededed" strokeDasharray="4 4" />
    ))}
    {solidX.map((x) => (
      <line key={`sx${x}`} x1={x / kx - dx} x2={x / kx - dx} y1={0} y2={h} stroke="#ececec" />
    ))}
    {ys.map((y) => (
      <line key={`y${y}`} x1={0} x2={w} y1={y / 3 - top} y2={y / 3 - top} stroke="#ebebeb" strokeDasharray="4 4" />
    ))}
    {solidY.map((y) => (
      <line key={`sy${y}`} x1={0} x2={w} y1={y / 3 - top} y2={y / 3 - top} stroke="#e8e8e8" strokeWidth="1.500" />
    ))}
  </g>
);

const Triangle = ({ x, y, dx, color = '#2fa83c', left }: { x: number; y: number; dx: number; color?: string; left?: boolean }) => {
  const px = x / kx - dx;
  const py = y / 3;
  return <path d={left ? `M${px + 2} ${py - 4}l-4 4 4 4z` : `M${px - 2} ${py - 4}l4 4-4 4z`} fill={color} />;
};

const UpArrow = ({ x, y, dx }: { x: number; y: number; dx: number }) => (
  <path transform={`translate(${x / kx - dx} ${y / 3})`} d="M0 -7l5 6.500h-2.800V7h-4.400v-7.500H-5z" fill="#2fa83c" />
);

const DownArrow = ({ x, y, dx }: { x: number; y: number; dx: number }) => (
  <path transform={`translate(${x / kx - dx} ${y / 3})`} d="M0 7l5.500-6.500H2.500V-7h-5v7.500H-5.500z" fill="#e8484c" />
);

const Square = ({ x, y, dx }: { x: number; y: number; dx: number }) => (
  <rect x={x / kx - dx - 5.500} y={y / 3 - 5.500} width="11" height="11" fill="#ec5458" />
);

const Cross = ({ x, y, dx, color }: { x: number; y: number; dx: number; color: string }) => (
  <path transform={`translate(${x / kx - dx} ${y / 3})`} d="M-6 -3l3 -3L0 -3l3 -3L6 -3 3 0l3 3-3 3-3-3-3 3-3-3 3-3z" fill={color} />
);

const PriceDrawing = ({ side }: { side: 'left' | 'right' }) => {
  if (side === 'left') {
    const dx = 0;
    return (
      <svg viewBox="0 0 868 619" preserveAspectRatio="none">
        <Grid
          xs={[128, 500, 874, 1246]}
          solidX={[315, 686, 1060, 1432]}
          ys={[5, 289, 431, 572, 714, 998, 1140, 1282, 1424, 1708]}
          solidY={[147, 856, 1568]}
          dx={dx}
          top={PRICE_TOP}
          w={868}
          h={619}
        />
        <Fill pts={[...leftCloudTop, [128, 1150], [97, 1180], [0, 1180]]} dx={dx} color="#d2f5da" />
        <Fill pts={[...leftCloudLow, [1512, 1150]]} dx={dx} color="#fde0e0" />
        <Line pts={[...leftCloudTop, ...leftCloudLow]} dx={dx} color="#84d8f8" w={1.6} />
        <Line pts={leftPink} dx={dx} color="#ffa0a0" w={1.3} />
        <line x1="0" x2="868" y1="144.700" y2="144.700" stroke="#ff80c0" strokeWidth="4.500" />
        {leftCandles.map((c) => (
          <CandleMark key={c[0]} c={c} dx={dx} half={7.8} />
        ))}
        <Line pts={leftOrange} dx={dx} color="#cc7a28" w={2.2} />
        <Line pts={leftGreen} dx={dx} color="#18cc18" w={2.2} />
        <Line pts={leftBlue} dx={dx} color="#1414e6" w={2.2} />
        <line x1="0" x2="868" y1="593.300" y2="593.300" stroke="#000" strokeWidth="2" />
        <Triangle x={951} y={713} dx={dx} />
        <Triangle x={1324} y={601} dx={dx} />
        <Triangle x={331} y={1325} dx={dx} />
        <Triangle x={1076} y={1337} dx={dx} />
        <Triangle x={1014} y={1070} dx={dx} color="#e8484c" left />
        <Triangle x={453} y={1302} dx={dx} color="#e8484c" left />
        <UpArrow x={967} y={1073} dx={dx} />
        <UpArrow x={1340} y={1080} dx={dx} />
        <UpArrow x={345} y={1578} dx={dx} />
        <Square x={998} y={1250} dx={dx} />
        <Cross x={438} y={1367} dx={dx} color="#e8484c" />
        <Cross x={1091} y={1620} dx={dx} color="#2fb84c" />
        <DownArrow x={1060} y={1690} dx={dx} />
      </svg>
    );
  }
  const dx = 50;
  return (
    <svg viewBox="0 0 850 619" preserveAspectRatio="none">
      <Grid
        xs={[168, 343, 518, 693, 868, 1218, 1393, 1568]}
        solidX={[1043]}
        ys={[265, 425, 742, 900, 1058, 1532, 1692]}
        solidY={[583, 1375]}
        dx={dx}
        top={PRICE_TOP}
        w={850}
        h={619}
      />
      <rect x="146.300" y="161.700" width="750" height="150.500" fill="rgba(110,150,245,.2)" stroke="#8aaaf6" strokeWidth="1.200" />
      <Fill pts={[...rightCloud.filter(([x]) => x <= 1395), [1395, 682], ...[...rightOrange].reverse().filter(([x]) => x < 1395)]} dx={dx} color="rgba(190,235,205,.75)" />
      <Fill pts={[[1395, 686], [1570, 698], [1570, 686]]} dx={dx} color="#fde0e0" />
      <Line pts={rightCloud} dx={dx} color="#6fd6f8" w={1.6} />
      <Line pts={rightPink} dx={dx} color="#ffa8a8" w={1.3} />
      <line x1="0" x2="850" y1="37" y2="37" stroke="#ff80c0" strokeWidth="4.500" />
      {rightCandles.map((c) => (
        <CandleMark key={c[0]} c={c} dx={dx} half={5.2} />
      ))}
      <Line pts={rightOrange} dx={dx} color="#cc7a28" w={2.2} />
      <Line pts={rightGreen} dx={dx} color="#18cc18" w={2.2} />
      <Line pts={rightBlue} dx={dx} color="#1414e6" w={2.2} />
      <line x1="0" x2="850" y1="537.300" y2="537.300" stroke="#000" strokeWidth="2" />
      <line x1="0" x2="850" y1="579.700" y2="579.700" stroke="#000" strokeWidth="2" />
      <line x1="0" x2="850" y1="590" y2="590" stroke="#ff80c0" strokeWidth="4.500" />
      <Triangle x={726} y={426} dx={dx} />
      <Triangle x={1143} y={1117} dx={dx} />
      <Triangle x={835} y={822} dx={dx} color="#e8484c" left />
      <Triangle x={1076} y={1046} dx={dx} color="#e8484c" left />
      <UpArrow x={737} y={743} dx={dx} />
      <Square x={825} y={1005} dx={dx} />
      <DownArrow x={1065} y={1367} dx={dx} />
      <Cross x={1154} y={1430} dx={dx} color="#2fb84c" />
    </svg>
  );
};

const RsiDrawing = ({ side }: { side: 'left' | 'right' }) => {
  const left = side === 'left';
  const dx = left ? 0 : 50;
  const w = left ? 868 : 850;
  const top = RSI_TOP - 420;
  return (
    <svg viewBox={`0 0 ${w} 149`} preserveAspectRatio="none">
      <Grid
        xs={left ? [128, 500, 874, 1246] : [168, 343, 518, 693, 868, 1218, 1393, 1568]}
        solidX={left ? [315, 686, 1060, 1432] : [1043]}
        ys={[628, 710, 948]}
        solidY={[]}
        dx={dx}
        top={top}
        w={w}
        h={149}
      />
      {left && leftRsiHigh.map((p) => <Fill key={p[0][0]} pts={p} dx={dx} top={top} color="#bff08c" />)}
      {!left && <Fill pts={rightRsiLow} dx={dx} top={top} color="#ff94b4" />}
      <line x1="0" x2={w} y1={781 / 3 - top} y2={781 / 3 - top} stroke="#6060e0" strokeWidth="1.300" />
      <line x1="0" x2={w} y1={875 / 3 - top} y2={875 / 3 - top} stroke="#6060e0" strokeWidth="1.300" />
      <Line pts={left ? leftRsi : rightRsi} dx={dx} top={top} color="#4a4a4a" w={1.2} />
      <line x1="0" x2={w} y1={828 / 3 - top} y2={828 / 3 - top} stroke="#2a2ae0" strokeWidth="3" />
    </svg>
  );
};

const VolumeDrawing = ({ side }: { side: 'left' | 'right' }) => {
  const left = side === 'left';
  const dx = left ? 0 : 50;
  const w = left ? 868 : 850;
  const top = VOL_TOP - 420;
  const half = left ? 7.8 : 5.2;
  const bars = left ? leftBars : rightBars;
  return (
    <svg viewBox={`0 0 ${w} 73`} preserveAspectRatio="none">
      <Grid
        xs={left ? [128, 500, 874, 1246] : [168, 343, 518, 693, 868, 1218, 1393, 1568]}
        solidX={left ? [315, 686, 1060, 1432] : [1043]}
        ys={[1118, 1170, 1222]}
        solidY={[]}
        dx={dx}
        top={top}
        w={w}
        h={73}
      />
      {bars.map(([x, y, kind]) => (
        <rect
          key={x}
          x={x / kx - dx - half}
          y={y / 3 - top}
          width={half * 2}
          height={100}
          fill={kind === 'g' ? 'url(#candleGreen)' : 'url(#candleRed)'}
          stroke={kind === 'g' ? '#2e9a3a' : '#b84a4a'}
          strokeWidth="1"
        />
      ))}
      <Line pts={left ? leftSma : rightSma} dx={dx} top={top} color="#1440e6" w={2} />
    </svg>
  );
};

const priceTicks: [string, number, boolean?][] = [
  ['35 320', 2], ['35 300', 49, true], ['35 280', 96], ['35 240', 190], ['35 200', 285, true], ['35 180', 332],
  ['35 160', 380], ['35 140', 427], ['35 120', 475], ['35 100', 523, true], ['35 080', 570],
];
const priceTags: [string, number, string][] = [
  ['35 290,1', 73, '#f78a8a'], ['35 260,2', 144, '#58c4f0'], ['35 230,3', 215, '#3ccc3c'], ['35 218,6', 242, '#d08a40'], ['35 069,9', 594, '#333'],
];
const rsiTicks: [string, number, boolean?][] = [['100', 9, true], ['80', 34], ['60', 63], ['40', 90], ['20', 116]];

const App = () => (
  <>
    <GlobalStyle />
    <Defs aria-hidden="true">
      <defs>
        <linearGradient id="candleGreen" x1="0" x2="1" y1="0" y2="0">
          <stop offset="0" stopColor="#42c84e" />
          <stop offset=".6" stopColor="#62e068" />
          <stop offset="1" stopColor="#58d860" />
        </linearGradient>
        <linearGradient id="candleRed" x1="0" x2="1" y1="0" y2="0">
          <stop offset="0" stopColor="#dc5656" />
          <stop offset=".6" stopColor="#f08484" />
          <stop offset="1" stopColor="#e87070" />
        </linearGradient>
      </defs>
    </Defs>
    <Page>
      <Chart>
        <Pane $h={620}>
          <Plot>
            <PriceDrawing side="left" />
            <LevelTag $x={-8} $y={127} $w={50}>5 259,5</LevelTag>
            <PivotLabel $x={839} $y={587}>Piv S</PivotLabel>
            <Source $x={-3}>IT-Finance.com - Temps Réel</Source>
          </Plot>
          <Axis>
            {priceTicks.map(([t, y, b]) => (
              <AxisLabel key={t} $y={y} $bold={b}>{t}</AxisLabel>
            ))}
            {priceTags.map(([t, y, c]) => (
              <AxisTag key={t} $y={y} $color={c}>{t}</AxisTag>
            ))}
          </Axis>
        </Pane>
        <Pane $h={150}>
          <Plot>
            <RsiDrawing side="left" />
            <LegendRow $x={-9}>
              <Legend><Swatch $c="#000" />RSI (14)</Legend>
            </LegendRow>
          </Plot>
          <Axis>
            {rsiTicks.map(([t, y, b]) => (
              <AxisLabel key={t} $y={y} $bold={b}>{t}</AxisLabel>
            ))}
            <AxisTag $y={45} $color="#222">74,267</AxisTag>
          </Axis>
        </Pane>
        <Pane $h={73} $last>
          <Plot>
            <VolumeDrawing side="left" />
            <LegendRow $x={-9}>
              <Legend><Swatch $c="#2fb84c" $c2="#e86a6a" />Volume</Legend>
              <Legend><Swatch $c="#1440e6" />SMA (50)</Legend>
            </LegendRow>
          </Plot>
          <Axis>
            <AxisLabel $y={8}>6 000</AxisLabel>
            <AxisLabel $y={27}>4 000</AxisLabel>
            <AxisTag $y={54} $color="#4a6cf0">1 480,7</AxisTag>
            <AxisLabel $y={67} $color="#5cc85c">64</AxisLabel>
          </Axis>
        </Pane>
      </Chart>

      <Toolbar>
        <ToolList>
          {toolIcons.map((icon, i) => (
            <Tool key={i} $active={i === 28}>
              <svg width="30" height="26" viewBox="0 0 30 26" overflow="visible">{icon}</svg>
            </Tool>
          ))}
        </ToolList>
        <ToolFoot />
      </Toolbar>

      <Chart>
        <Pane $h={620}>
          <Plot>
            <PriceDrawing side="right" />
            <LevelTag $x={0} $y={19} $w={50}>35 259,5</LevelTag>
            <LevelTag $x={0} $y={572} $w={50}>35 050,0</LevelTag>
            <PivotLabel $x={417} $y={573}>Piv M</PivotLabel>
            <PivotLabel $x={829} $y={530}>Piv S</PivotLabel>
            <Source $x={2}>IT-Finance.com - Temps Réel</Source>
          </Plot>
        </Pane>
        <Pane $h={150}>
          <Plot>
            <RsiDrawing side="right" />
            <LegendRow $x={0}>
              <Legend><Swatch $c="#000" />RSI (14)</Legend>
            </LegendRow>
          </Plot>
        </Pane>
        <Pane $h={73} $last>
          <Plot>
            <VolumeDrawing side="right" />
            <LegendRow $x={0}>
              <Legend><Swatch $c="#2fb84c" $c2="#e86a6a" />Volume</Legend>
              <Legend><Swatch $c="#1440e6" />SMA (50)</Legend>
            </LegendRow>
          </Plot>
        </Pane>
      </Chart>
    </Page>
  </>
);

export default App;
